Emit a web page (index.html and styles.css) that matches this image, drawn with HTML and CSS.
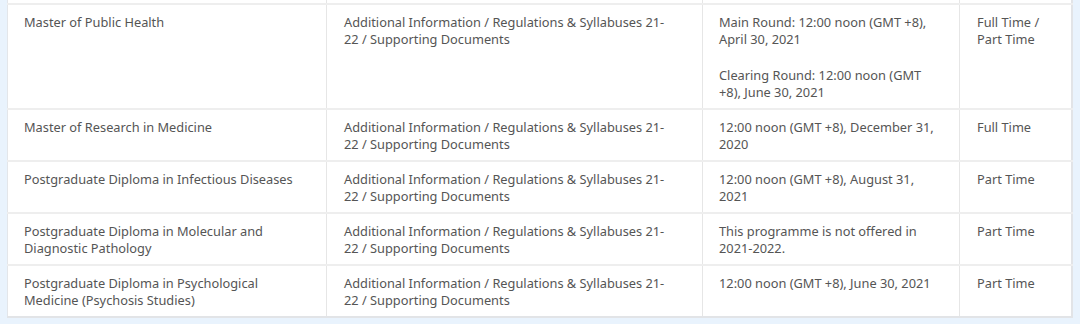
FILE: index.html
```html
<!DOCTYPE html>
<html lang="en">
<head>
<meta charset="utf-8">
<title>Programmes</title>
<link rel="stylesheet" href="styles.css">
</head>
<body>
<div class="panel">
<table class="prog">
<colgroup>
<col class="c-name"><col class="c-info"><col class="c-date"><col class="c-mode">
</colgroup>
<tbody>
<tr class="clip"><td></td><td></td><td></td><td></td></tr>
<tr>
<td>Master of Public Health</td>
<td>Additional Information / Regulations &amp; Syllabuses 21-<wbr>22 / Supporting Documents</td>
<td><p>Main Round: 12:00 noon (GMT +8), April 30, 2021</p><p>Clearing Round: 12:00 noon (GMT +8), June 30, 2021</p></td>
<td>Full Time / Part Time</td>
</tr>
<tr>
<td>Master of Research in Medicine</td>
<td>Additional Information / Regulations &amp; Syllabuses 21-<wbr>22 / Supporting Documents</td>
<td>12:00 noon (GMT +8), December 31, 2020</td>
<td>Full Time</td>
</tr>
<tr>
<td>Postgraduate Diploma in Infectious Diseases</td>
<td>Additional Information / Regulations &amp; Syllabuses 21-<wbr>22 / Supporting Documents</td>
<td>12:00 noon (GMT +8), August 31, 2021</td>
<td>Part Time</td>
</tr>
<tr>
<td>Postgraduate Diploma in Molecular and Diagnostic Pathology</td>
<td>Additional Information / Regulations &amp; Syllabuses 21-<wbr>22 / Supporting Documents</td>
<td>This programme is not offered in 2021-2022.</td>
<td>Part Time</td>
</tr>
<tr>
<td>Postgraduate Diploma in Psychological Medicine (Psychosis Studies)</td>
<td>Additional Information / Regulations &amp; Syllabuses 21-<wbr>22 / Supporting Documents</td>
<td>12:00 noon (GMT +8), June 30, 2021</td>
<td>Part Time</td>
</tr>
</tbody>
</table>
</div>
</body>
</html>
```
FILE: styles.css
```css
html, body {
  margin: 0;
  padding: 0;
  background: #e9f3fd;
}
.panel {
  padding: 0 6px 0 7px;
}
.prog {
  width: 1066px;
  border-collapse: collapse;
  table-layout: fixed;
  background: #fff;
  border-left: 1px solid #e3e6ea;
  border-right: 2px solid #e2e4e7;
  border-bottom: 2px solid #e2e4e7;
  font-family: "Noto Sans", "Open Sans", sans-serif;
  font-size: 12.8px;
  line-height: 17px;
  color: #555;
}
.c-name { width: 319px; }
.c-info { width: 376px; }
.c-date { width: 257px; }
.c-mode { width: auto; }
.prog td {
  vertical-align: top;
  padding: 9px 16px 7px 16px;
  border-top: 2px solid #eeeeee;
  border-left: 1px solid #e6e6e6;
}
.prog td:first-child { border-left: none; }
.prog td:nth-child(2) { padding-left: 17px; padding-right: 28px; }
.prog td:nth-child(4) { padding-left: 17px; }
.prog tr.clip td {
  height: 3px;
  padding: 0;
  border-top: none;
}
.prog p { margin: 0 0 19px 0; }
.prog p:last-child { margin-bottom: 0; }
```
